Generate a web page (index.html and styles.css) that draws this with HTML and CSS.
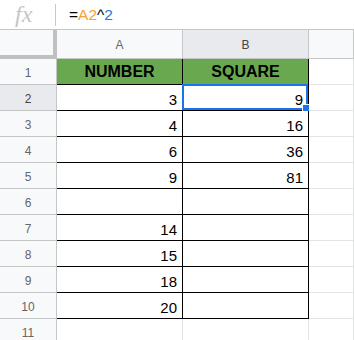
FILE: index.html
```html
<!DOCTYPE html>
<html lang="en">
<head>
  <meta charset="UTF-8">
  <meta name="viewport" content="width=device-width, initial-scale=1.0">
  <title>Sheet - SQUARE</title>
  <link rel="stylesheet" href="styles.css">
</head>
<body>

  <div class="formula-bar">
    <span class="fx">fx</span>
    <span class="fx-divider"></span>
    <span class="formula">=<span class="ref">A2</span>^<span class="num">2</span></span>
  </div>

  <div class="sheet">
    <!-- header row -->
    <div class="corner"></div>
    <div class="ch">A</div>
    <div class="ch active">B</div>
    <div class="ch"></div>

    <div class="rh">1</div>
    <div class="cell box head">NUMBER</div>
    <div class="cell box head">SQUARE</div>
    <div class="cell"></div>

    <div class="rh active">2</div>
    <div class="cell box">3</div>
    <div class="cell box selected">9<span class="sel"><span class="handle"></span></span></div>
    <div class="cell"></div>

    <div class="rh">3</div>
    <div class="cell box">4</div>
    <div class="cell box">16</div>
    <div class="cell"></div>

    <div class="rh">4</div>
    <div class="cell box">6</div>
    <div class="cell box">36</div>
    <div class="cell"></div>

    <div class="rh">5</div>
    <div class="cell box">9</div>
    <div class="cell box">81</div>
    <div class="cell"></div>

    <div class="rh">6</div>
    <div class="cell box"></div>
    <div class="cell box"></div>
    <div class="cell"></div>

    <div class="rh">7</div>
    <div class="cell box">14</div>
    <div class="cell box"></div>
    <div class="cell"></div>

    <div class="rh">8</div>
    <div class="cell box">15</div>
    <div class="cell box"></div>
    <div class="cell"></div>

    <div class="rh">9</div>
    <div class="cell box">18</div>
    <div class="cell box"></div>
    <div class="cell"></div>

    <div class="rh">10</div>
    <div class="cell box">20</div>
    <div class="cell box"></div>
    <div class="cell"></div>

    <div class="rh">11</div>
    <div class="cell"></div>
    <div class="cell"></div>
    <div class="cell"></div>
  </div>

</body>
</html>
```

FILE: styles.css
```css
body {
  margin: 0;
  width: 354px;
  height: 340px;
  overflow: hidden;
  background: #fff;
  font-family: "Liberation Sans", Arial, sans-serif;
}

/* formula bar */
.formula-bar {
  display: flex;
  align-items: center;
  height: 29px;
  border-bottom: 1px solid #c4c7c5;
}
.fx {
  width: 55px;
  box-sizing: border-box;
  padding-left: 15px;
  font-family: "Liberation Serif", serif;
  font-style: italic;
  font-size: 24px;
  color: #c6c6c6;
  line-height: 29px;
}
.fx-divider {
  width: 1px;
  height: 22px;
  background: #c9c9c9;
}
.formula {
  padding-left: 13px;
  font-size: 15.5px;
  color: #000;
}
.ref { color: #f5a030; }
.num { color: #2a75e0; }

/* grid */
.sheet {
  display: grid;
  grid-template-columns: 57px 126px 126px 1fr;
  grid-template-rows: 29px repeat(11, 26px);
}

.corner {
  background: #f8f9fa;
  border-right: 4px solid #c0c0c0;
  border-bottom: 4px solid #c0c0c0;
}

.ch {
  display: flex;
  align-items: center;
  justify-content: center;
  background: #f8f9fa;
  border-right: 1px solid #c4c7c5;
  border-bottom: 1px solid #c4c7c5;
  font-size: 12px;
  color: #666;
  padding-top: 1px;
}

.rh {
  display: flex;
  align-items: center;
  justify-content: center;
  background: #f8f9fa;
  border-right: 1px solid #c4c7c5;
  border-bottom: 1px solid #c4c7c5;
  font-size: 12px;
  color: #666;
  padding-top: 2px;
}

.ch.active, .rh.active {
  background: #e8eaed;
  color: #444;
}

.cell {
  position: relative;
  display: flex;
  align-items: flex-end;
  justify-content: flex-end;
  padding: 0 5px 1px 0;
  border-right: 1px solid #e2e3e3;
  border-bottom: 1px solid #e2e3e3;
  font-size: 15px;
  line-height: 18px;
  color: #000;
}

.cell.box {
  border-right-color: #000;
  border-bottom-color: #000;
}

.cell.head {
  align-items: center;
  justify-content: center;
  padding: 1px 0 0;
  background: #6aa84f;
  font-size: 16px;
  font-weight: bold;
}

/* selection on B2 */
.sel {
  position: absolute;
  top: -1px;
  left: -1px;
  right: 0;
  bottom: 0;
  border: 2px solid #1a73e8;
}
.handle {
  position: absolute;
  right: -4px;
  bottom: -4px;
  width: 6px;
  height: 6px;
  background: #1a73e8;
  border: 1px solid #fff;
}
```
